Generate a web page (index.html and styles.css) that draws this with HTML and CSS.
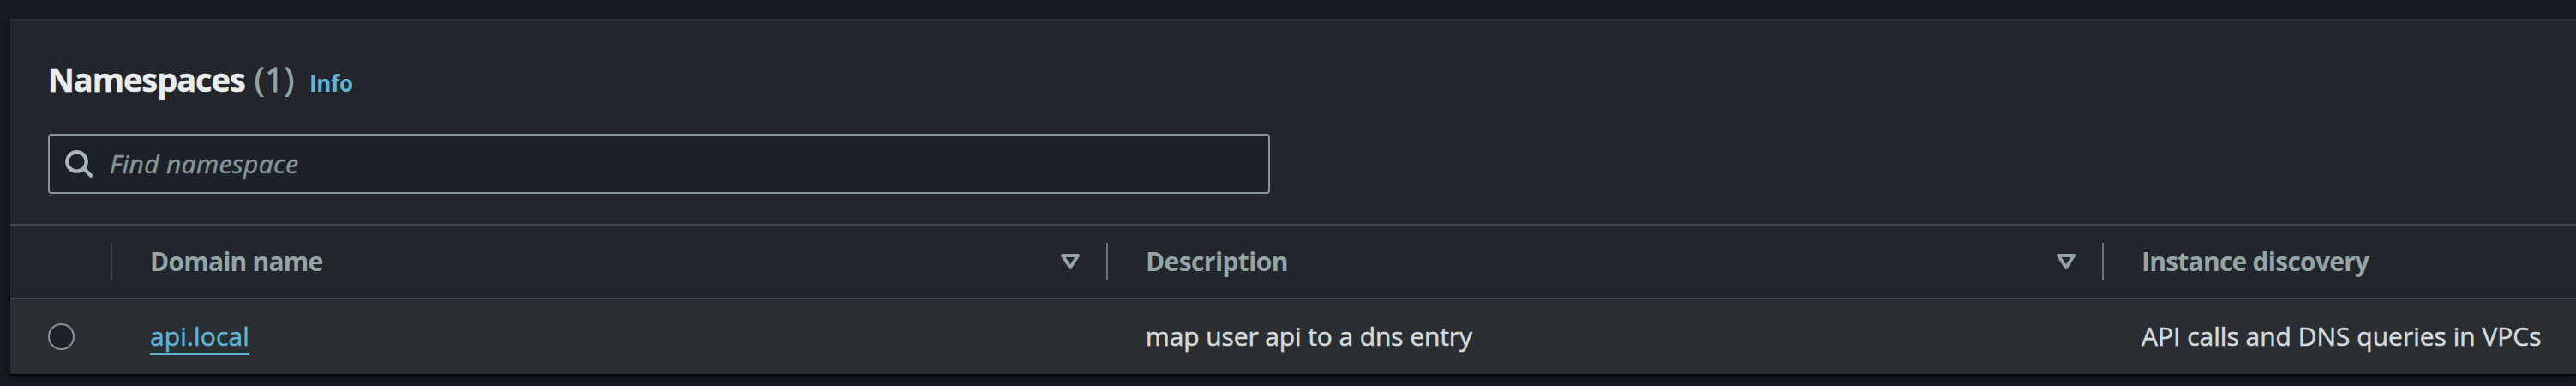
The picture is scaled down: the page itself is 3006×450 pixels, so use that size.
FILE: index.html
```
<!DOCTYPE html>
<html lang="en">
<head>
<meta charset="utf-8">
<title>Namespaces</title>
<link rel="stylesheet" href="styles.css">
</head>
<body>
<main class="card">
  <header class="card-header">
    <div class="heading">
      <h2 class="title">Namespaces</h2>
      <span class="count">(1)</span>
      <a class="info">Info</a>
    </div>
    <div class="search">
      <svg class="search-icon" width="34" height="34" viewBox="0 0 34 34" fill="none" stroke="currentColor" stroke-width="4.4">
        <circle cx="13.5" cy="14.4" r="11.2"/>
        <path d="M21.2 22l10.2 10"/>
      </svg>
      <span class="placeholder">Find namespace</span>
    </div>
  </header>
  <div class="row row-head">
    <div class="cell cell-select"></div>
    <div class="cell"><span class="label-domain">Domain name</span>
      <svg class="sort" width="24" height="20" viewBox="0 0 24 20" fill="none" stroke="currentColor" stroke-width="4" stroke-linejoin="round"><path d="M3 3h18l-9 14z"/></svg>
    </div>
    <div class="cell"><span class="label-description">Description</span>
      <svg class="sort" width="24" height="20" viewBox="0 0 24 20" fill="none" stroke="currentColor" stroke-width="4" stroke-linejoin="round"><path d="M3 3h18l-9 14z"/></svg>
    </div>
    <div class="cell"><span class="label-discovery">Instance discovery</span></div>
  </div>
  <div class="row row-body">
    <div class="cell cell-select"><span class="radio"></span></div>
    <div class="cell"><a class="link">api.local</a></div>
    <div class="cell"><span class="description">map user api to a dns entry</span></div>
    <div class="cell"><span>API calls and DNS queries in VPCs</span></div>
  </div>
</main>
</body>
</html>
```
FILE: styles.css
```
* { box-sizing: border-box; }
body {
  margin: 0;
  height: 450px;
  padding: 22px 0 0 12px;
  overflow: hidden;
  background: #16191f;
  color: #d5dbdb;
  font: 30px "Open Sans", sans-serif;
}
.card {
  height: 414px;
  border-top: 2px solid #2a2e33;
  background: #22252c;
  box-shadow: 0 2px 2px rgba(0, 0, 0, 0.5), 2px 2px 2px rgba(0, 0, 0, 0.3), -2px 3px 4px rgba(0, 0, 0, 0.4);
}
.card-header {
  height: 237px;
  padding: 46px 44px 0;
}
.heading {
  display: flex;
  align-items: baseline;
  height: 44px;
  margin-bottom: 42px;
  line-height: 44px;
}
.title {
  margin: 0;
  color: #eaeded;
  font-size: 38px;
  font-weight: 700;
  letter-spacing: -1.06px;
  -webkit-text-stroke: 0.4px currentColor;
}
.count {
  margin-left: 11px;
  color: #95a5a6;
  font-size: 39px;
  letter-spacing: 0.6px;
  -webkit-text-stroke: 0.8px currentColor;
}
.info {
  margin-left: 17px;
  color: #5eb5d8;
  font-size: 26px;
  font-weight: 700;
  letter-spacing: -0.2px;
}
.search {
  display: flex;
  align-items: center;
  width: 1426px;
  height: 70px;
  padding: 0 18px;
  border: 2px solid #879596;
  border-radius: 4px;
  background: #1c2028;
}
.search-icon { color: #aab7b8; }
.placeholder {
  margin-left: 18px;
  padding-bottom: 2px;
  color: #879596;
  font-style: italic;
  letter-spacing: 0.35px;
  -webkit-text-stroke: 0.5px currentColor;
}
.row {
  display: grid;
  grid-template-columns: 119px 1162px 1162px 1fr;
  border-top: 2px solid #414750;
}
.cell {
  display: flex;
  align-items: center;
  padding-left: 44px;
  white-space: nowrap;
}
.row-head {
  height: 86px;
  color: #95a5a6;
  font-weight: 700;
}
.row-head .cell {
  height: 44px;
  margin: 20px 0;
  border-right: 2px solid #687078;
}
.row-head span { padding-bottom: 2px; }
.row-head .cell-select { border-color: #414750; }
.row-head .cell:last-child { border-right: 0; }
.label-domain { letter-spacing: -0.78px; }
.label-description { letter-spacing: -0.6px; }
.label-discovery { letter-spacing: -0.75px; }
.sort {
  margin: 0 30px 0 auto;
}
.row-body {
  height: 89px;
  background: #2a2e33;
  -webkit-text-stroke: 0.5px currentColor;
}
.row-body .cell { padding-bottom: 2px; }
.row-body .cell-select { padding-bottom: 0; }
.radio {
  width: 31px;
  height: 31px;
  border: 2px solid #879596;
  border-radius: 50%;
  background: #1c2028;
}
.link {
  height: 39px;
  margin-top: 6px;
  border-bottom: 2px solid #5eb5d8;
  color: #5eb5d8;
  line-height: 34px;
  letter-spacing: 0.15px;
}
.description { letter-spacing: -0.1px; }
```
